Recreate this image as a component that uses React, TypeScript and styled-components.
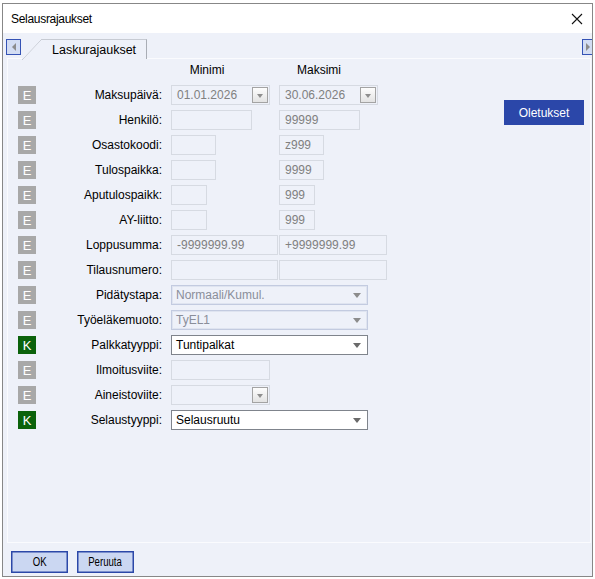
import React from 'react';
import styled, { createGlobalStyle } from 'styled-components';

const GlobalStyle = createGlobalStyle`
  html, body {
    margin: 0;
    padding: 0;
    background: #ffffff;
  }
  body {
    font-family: "Liberation Sans", Arial, sans-serif;
    font-size: 12px;
    color: #000;
  }
`;

const Page = styled.div`
  padding: 3px 0 0 2px;
`;

const Window = styled.div`
  width: 591px;
  height: 574px;
  box-sizing: border-box;
  border: 1px solid #878787;
  display: flex;
  flex-direction: column;
  overflow: hidden;
  background: #eef1f9;
`;

const TitleBar = styled.div`
  height: 29px;
  flex: none;
  background: #ffffff;
  display: flex;
  align-items: center;
  padding: 0 9px 0 8px;
  font-size: 12px;
  letter-spacing: -0.3px;
`;

const Title = styled.span`
  flex: 1;
`;

const CloseIcon = () => (
  <svg width="12" height="12" viewBox="0 0 12 12">
    <path d="M1 1 L11 11 M11 1 L1 11" stroke="#111" strokeWidth="1.1" fill="none" />
  </svg>
);

const TabStrip = styled.div`
  height: 25px;
  flex: none;
  display: flex;
  align-items: flex-end;
  padding-left: 3px;
`;

const ScrollButton = styled.div<{ $right?: boolean }>`
  align-self: flex-start;
  margin-top: 6px;
  width: 15px;
  height: 16px;
  box-sizing: border-box;
  flex: none;
  border: 1px solid #3553b5;
  background: #d3ddf3;
  display: flex;
  align-items: center;
  justify-content: center;
  margin-left: ${p => (p.$right ? 'auto' : '0')};
  margin-right: ${p => (p.$right ? '-5px' : '0')};
  padding-right: ${p => (p.$right ? '4px' : '0')};

  &::after {
    content: '';
    width: 0;
    height: 0;
    border-top: 4px solid transparent;
    border-bottom: 4px solid transparent;
    ${p =>
      p.$right
        ? 'border-left: 4px solid #8c8c8c;'
        : 'border-right: 4px solid #8c8c8c;'}
  }
`;

const Tab = styled.div`
  position: relative;
  height: 20px;
  box-sizing: border-box;
  margin-left: 1px;
  margin-bottom: -1px;
  padding: 0 10px 0 30px;
  display: flex;
  align-items: center;
  font-size: 12.5px;
  border-top: 1px solid #c7cbd3;
  border-right: 1px solid #a9adb5;
  background: #eef1f9;
  z-index: 1;

  &::before {
    content: '';
    position: absolute;
    left: 0;
    top: -1px;
    width: 20px;
    height: 21px;
    background: linear-gradient(
      to bottom right,
      #eef1f9 calc(50% - 0.6px),
      #c7cbd3 50%,
      #eef1f9 calc(50% + 0.6px)
    );
  }
`;

const Pane = styled.div`
  flex: 1;
  margin: 0 1px 0 4px;
  border: 1px solid #fafbfe;
  display: flex;
  padding: 1px 6px 0 10px;
`;

const Form = styled.div`
  flex: 1;
  display: flex;
  flex-direction: column;
  gap: 5px;
`;

const Row = styled.div`
  height: 20px;
  display: flex;
  align-items: center;
`;

const Badge = styled.div<{ $kind: 'E' | 'K' }>`
  width: 18px;
  height: 18px;
  flex: none;
  background: ${p => (p.$kind === 'K' ? '#0b620b' : '#a8a8a8')};
  color: #ffffff;
  font-size: 13px;
  display: flex;
  align-items: center;
  justify-content: center;
`;

const BadgeSpacer = styled.div`
  width: 18px;
  flex: none;
`;

const Label = styled.div`
  width: 135px;
  box-sizing: border-box;
  padding-right: 9px;
  text-align: right;
  flex: none;
  white-space: nowrap;
`;

const HeaderCell = styled.div<{ $pad: number }>`
  width: 108px;
  box-sizing: border-box;
  padding-right: ${p => p.$pad}px;
  text-align: center;
  flex: none;
`;

const Cell = styled.div`
  width: 108px;
  flex: none;
  display: flex;
`;

const Field = styled.div<{ $w: number }>`
  width: ${p => p.$w}px;
  height: 20px;
  box-sizing: border-box;
  border: 1px solid #d6dae2;
  color: #808080;
  padding-left: 5px;
  line-height: 18px;
  display: flex;
  align-items: center;
  white-space: nowrap;
`;

const FieldText = styled.span`
  flex: 1;
`;

const DropButton = styled.div`
  width: 16px;
  height: 16px;
  box-sizing: border-box;
  margin-right: 1px;
  border: 1px solid #a3a3a3;
  background: linear-gradient(#fdfdfd, #e3e3e3);
  display: flex;
  align-items: center;
  justify-content: center;

  &::after {
    content: '';
    width: 0;
    height: 0;
    border-left: 3.5px solid transparent;
    border-right: 3.5px solid transparent;
    border-top: 4px solid #8e8e8e;
    margin-top: 1px;
  }
`;

const Select = styled.div<{ $enabled?: boolean }>`
  width: 197px;
  height: 20px;
  box-sizing: border-box;
  border: 1px solid ${p => (p.$enabled ? '#7f848c' : '#c3cbe0')};
  box-shadow: ${p => (p.$enabled ? 'none' : 'inset 0 0 0 1px #dfe4f0')};
  background: ${p => (p.$enabled ? '#ffffff' : 'transparent')};
  color: ${p => (p.$enabled ? '#000000' : '#8a8e9a')};
  padding: 0 6px 0 4px;
  display: flex;
  align-items: center;

  &::after {
    content: '';
    width: 0;
    height: 0;
    border-left: 4px solid transparent;
    border-right: 4px solid transparent;
    border-top: 5px solid ${p => (p.$enabled ? '#6a6a6a' : '#8c8c8c')};
  }
`;

const Aside = styled.div`
  padding-top: 40px;
`;

const PrimaryButton = styled.div`
  width: 80px;
  height: 25px;
  background: #2b47a9;
  color: #ffffff;
  display: flex;
  align-items: center;
  justify-content: center;
`;

const Footer = styled.div`
  height: 33px;
  flex: none;
  display: flex;
  gap: 9px;
  padding: 8px 0 0 8px;
  box-sizing: border-box;
`;

const DialogButton = styled.div`
  width: 57px;
  height: 22px;
  box-sizing: border-box;
  border: 1px solid #2c48a8;
  box-shadow: inset 0 0 0 0.5px #2c48a8;
  background: #cbd7f2;
  font-size: 12px;
  display: flex;
  align-items: center;
  justify-content: center;
`;

// the dialog buttons use a narrow system font
const NarrowText = styled.span`
  display: inline-block;
  transform: scaleX(0.8);
`;

type Rule = {
  badge: 'E' | 'K';
  label: string;
  min?: React.ReactNode;
  max?: React.ReactNode;
  wide?: React.ReactNode;
};

const field = (w: number, text = '', drop = false) => (
  <Field $w={w}>
    <FieldText>{text}</FieldText>
    {drop && <DropButton />}
  </Field>
);

const rules: Rule[] = [
  { badge: 'E', label: 'Maksupäivä:', min: field(99, '01.01.2026', true), max: field(99, '30.06.2026', true) },
  { badge: 'E', label: 'Henkilö:', min: field(81), max: field(81, '99999') },
  { badge: 'E', label: 'Osastokoodi:', min: field(45), max: field(45, 'z999') },
  { badge: 'E', label: 'Tulospaikka:', min: field(45), max: field(45, '9999') },
  { badge: 'E', label: 'Aputulospaikk:', min: field(36), max: field(36, '999') },
  { badge: 'E', label: 'AY-liitto:', min: field(36), max: field(36, '999') },
  { badge: 'E', label: 'Loppusumma:', min: field(107, '-9999999.99'), max: field(108, '+9999999.99') },
  { badge: 'E', label: 'Tilausnumero:', min: field(107), max: field(108) },
  { badge: 'E', label: 'Pidätystapa:', wide: <Select><FieldText>Normaali/Kumul.</FieldText></Select> },
  { badge: 'E', label: 'Työeläkemuoto:', wide: <Select><FieldText>TyEL1</FieldText></Select> },
  { badge: 'K', label: 'Palkkatyyppi:', wide: <Select $enabled><FieldText>Tuntipalkat</FieldText></Select> },
  { badge: 'E', label: 'Ilmoitusviite:', min: field(99) },
  { badge: 'E', label: 'Aineistoviite:', min: field(99, '', true) },
  { badge: 'K', label: 'Selaustyyppi:', wide: <Select $enabled><FieldText>Selausruutu</FieldText></Select> },
];

export default function App() {
  return (
    <Page>
      <GlobalStyle />
      <Window>
        <TitleBar>
          <Title>Selausrajaukset</Title>
          <CloseIcon />
        </TitleBar>
        <TabStrip>
          <ScrollButton />
          <Tab>Laskurajaukset</Tab>
          <ScrollButton $right />
        </TabStrip>
        <Pane>
          <Form>
            <Row>
              <BadgeSpacer />
              <Label />
              <HeaderCell $pad={36}>Minimi</HeaderCell>
              <HeaderCell $pad={28}>Maksimi</HeaderCell>
            </Row>
            {rules.map(r => (
              <Row key={r.label}>
                <Badge $kind={r.badge}>{r.badge}</Badge>
                <Label>{r.label}</Label>
                {r.wide ? (
                  r.wide
                ) : (
                  <>
                    <Cell>{r.min}</Cell>
                    <Cell>{r.max}</Cell>
                  </>
                )}
              </Row>
            ))}
          </Form>
          <Aside>
            <PrimaryButton>Oletukset</PrimaryButton>
          </Aside>
        </Pane>
        <Footer>
          <DialogButton><NarrowText>OK</NarrowText></DialogButton>
          <DialogButton><NarrowText>Peruuta</NarrowText></DialogButton>
        </Footer>
      </Window>
    </Page>
  );
}
